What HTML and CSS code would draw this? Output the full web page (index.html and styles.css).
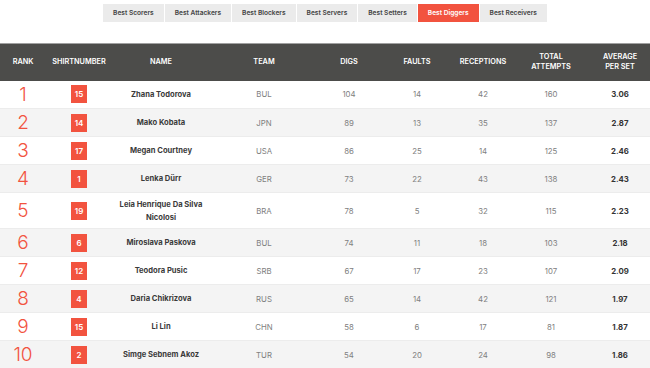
FILE: index.html
```html
<!DOCTYPE html>
<html>
<head>
<meta charset="utf-8">
<link rel="stylesheet" href="styles.css">
</head>
<body>
<nav class="tabs">
  <a class="tab">Best Scorers</a>
  <a class="tab">Best Attackers</a>
  <a class="tab">Best Blockers</a>
  <a class="tab">Best Servers</a>
  <a class="tab">Best Setters</a>
  <a class="tab active">Best Diggers</a>
  <a class="tab">Best Receivers</a>
</nav>
<table class="stats">
  <colgroup>
    <col class="c-rank"><col class="c-shirt"><col class="c-name"><col class="c-team"><col class="c-digs"><col class="c-faults"><col class="c-rec"><col class="c-total"><col class="c-avg">
  </colgroup>
  <thead>
    <tr>
      <th>RANK</th><th>SHIRTNUMBER</th><th>NAME</th><th>TEAM</th><th>DIGS</th><th>FAULTS</th><th>RECEPTIONS</th><th>TOTAL<br>ATTEMPTS</th><th>AVERAGE<br>PER SET</th>
    </tr>
  </thead>
  <tbody>
    <tr><td class="rank">1</td><td><span class="badge">15</span></td><td class="name">Zhana Todorova</td><td>BUL</td><td>104</td><td>14</td><td>42</td><td>160</td><td class="avg">3.06</td></tr>
    <tr><td class="rank">2</td><td><span class="badge">14</span></td><td class="name">Mako Kobata</td><td>JPN</td><td>89</td><td>13</td><td>35</td><td>137</td><td class="avg">2.87</td></tr>
    <tr><td class="rank">3</td><td><span class="badge">17</span></td><td class="name">Megan Courtney</td><td>USA</td><td>86</td><td>25</td><td>14</td><td>125</td><td class="avg">2.46</td></tr>
    <tr><td class="rank">4</td><td><span class="badge">1</span></td><td class="name">Lenka Dürr</td><td>GER</td><td>73</td><td>22</td><td>43</td><td>138</td><td class="avg">2.43</td></tr>
    <tr class="tall"><td class="rank">5</td><td><span class="badge">19</span></td><td class="name">Leia Henrique Da Silva<br>Nicolosi</td><td>BRA</td><td>78</td><td>5</td><td>32</td><td>115</td><td class="avg">2.23</td></tr>
    <tr><td class="rank">6</td><td><span class="badge">6</span></td><td class="name">Miroslava Paskova</td><td>BUL</td><td>74</td><td>11</td><td>18</td><td>103</td><td class="avg">2.18</td></tr>
    <tr><td class="rank">7</td><td><span class="badge">12</span></td><td class="name">Teodora Pusic</td><td>SRB</td><td>67</td><td>17</td><td>23</td><td>107</td><td class="avg">2.09</td></tr>
    <tr><td class="rank">8</td><td><span class="badge">4</span></td><td class="name">Daria Chikrizova</td><td>RUS</td><td>65</td><td>14</td><td>42</td><td>121</td><td class="avg">1.97</td></tr>
    <tr><td class="rank">9</td><td><span class="badge">15</span></td><td class="name">Li Lin</td><td>CHN</td><td>58</td><td>6</td><td>17</td><td>81</td><td class="avg">1.87</td></tr>
    <tr><td class="rank">10</td><td><span class="badge">2</span></td><td class="name">Simge Sebnem Akoz</td><td>TUR</td><td>54</td><td>20</td><td>24</td><td>98</td><td class="avg">1.86</td></tr>
  </tbody>
</table>
</body>
</html>
```

FILE: styles.css
```css
* { box-sizing: border-box; }
html, body { margin: 0; padding: 0; background: #fff; }
body { font-family: Inter, "Liberation Sans", sans-serif; color: #333; overflow: hidden; }

.tabs {
  display: flex;
  justify-content: center;
  gap: 1px;
  padding-top: 4px;
  height: 43px;
}
.tab {
  height: 18px;
  line-height: 18px;
  background: #ebebeb;
  color: #444;
  font-size: 6.6px;
  font-weight: 600;
  padding: 0 10px;
  white-space: nowrap;
}
.tab.active { background: #f2533f; color: #fff; }

.stats {
  width: 650px;
  border-collapse: collapse;
  table-layout: fixed;
}
.c-rank { width: 46px; }
.c-shirt { width: 66px; }
.c-name { width: 98px; }
.c-team { width: 108px; }
.c-digs { width: 62px; }
.c-faults { width: 74px; }
.c-rec { width: 58px; }
.c-total { width: 78px; }
.c-avg { width: 60px; }

.stats thead tr {
  background: #4c4c4a;
  border-top: 1px solid #a0a0a0;
  height: 37px;
}
.stats th {
  color: #fff;
  font-size: 7.3px;
  font-weight: 600;
  line-height: 10px;
  text-align: center;
  padding: 0;
}
.stats tbody tr {
  height: 28px;
  border-bottom: 1px solid #ececec;
}
.stats tbody tr:nth-child(odd) { background: #fff; }
.stats tbody tr:nth-child(even) { background: #f4f4f4; }
.stats tbody tr.tall { height: 36px; }
.stats td {
  text-align: center;
  font-size: 7.8px;
  color: #808080;
  padding: 0;
  vertical-align: middle;
}
.stats td.rank {
  font-size: 19px;
  font-weight: 300;
  color: #f2533f;
}
.stats td.name {
  font-weight: 700;
  color: #3a3a3a;
  font-size: 7.6px;
  line-height: 13px;
}
.stats td.avg {
  font-weight: 700;
  color: #333;
}
.badge {
  display: inline-block;
  width: 16px;
  height: 18px;
  line-height: 18px;
  background: #f2533f;
  color: #fff;
  font-size: 8px;
  font-weight: 600;
  text-align: center;
}
```
